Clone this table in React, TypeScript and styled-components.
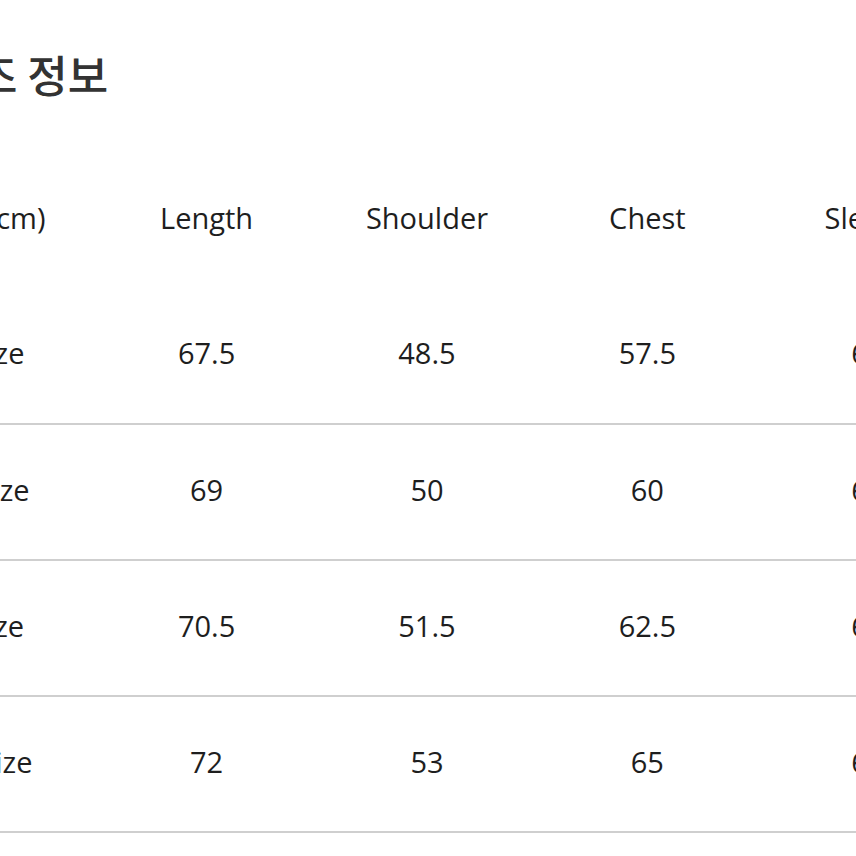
import styled, { createGlobalStyle } from "styled-components";

const GlobalStyle = createGlobalStyle`
  html, body {
    margin: 0;
    padding: 0;
    background: #fff;
    overflow: hidden;
  }
  body {
    font-family: "Open Sans", "Noto Sans CJK KR", sans-serif;
    color: #222;
  }
`;

const Page = styled.div`
  width: 1102px;
  margin-left: -124px;
`;

const Title = styled.h2`
  margin: 0;
  padding: 46px 0 0 20px;
  height: 104px;
  box-sizing: border-box;
  font-family: "Noto Sans CJK KR", sans-serif;
  font-size: 44px;
  font-weight: 500;
  line-height: 56px;
  color: #333;
  letter-spacing: 0;
`;

const Table = styled.table`
  width: 1102px;
  table-layout: fixed;
  border-collapse: collapse;
  margin-top: 48px;
`;

const Row = styled.tr<{ $line: boolean }>`
  height: 136px;
  border-bottom: ${({ $line }) => ($line ? "2px solid #cfcfcf" : "none")};
`;

const Cell = styled.td`
  text-align: center;
  vertical-align: middle;
  font-size: 29px;
  font-weight: 400;
  color: #1e1e1e;
  padding: 0 0 6px;
  white-space: nowrap;
`;

const headers = ["Size (cm)", "Length", "Shoulder", "Chest", "Sleeve"];

const sizes = [
  { label: "S Size", values: ["67.5", "48.5", "57.5", "61"] },
  { label: "M Size", values: ["69", "50", "60", "62"] },
  { label: "L Size", values: ["70.5", "51.5", "62.5", "63"] },
  { label: "XL Size", values: ["72", "53", "65", "64"] },
];

const App = () => {
  return (
    <Page>
      <GlobalStyle />
      <Title>사이즈 정보</Title>
      <Table>
        <tbody>
          <Row $line={false}>
            {headers.map((header) => (
              <Cell key={header}>{header}</Cell>
            ))}
          </Row>
          {sizes.map((size) => (
            <Row $line key={size.label}>
              <Cell>{size.label}</Cell>
              {size.values.map((value, index) => (
                <Cell key={index}>{value}</Cell>
              ))}
            </Row>
          ))}
        </tbody>
      </Table>
    </Page>
  );
};

export default App;
